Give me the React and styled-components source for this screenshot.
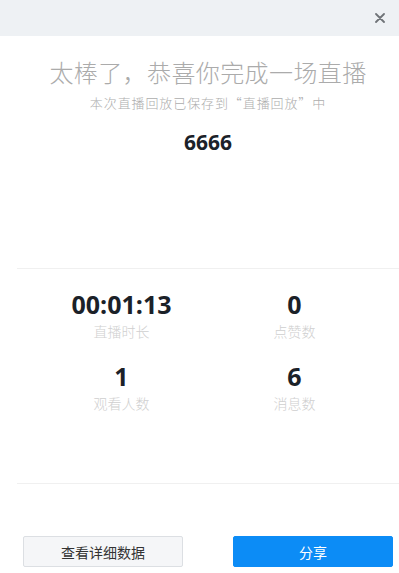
import React from "react";
import styled, { createGlobalStyle } from "styled-components";

const Global = createGlobalStyle`
  html, body { margin: 0; padding: 0; background: #fff; }
  body {
    font-family: "Noto Sans CJK SC", "Noto Sans", sans-serif;
  }
`;

const Wrapper = styled.div`
  width: 399px;
  height: 573px;
  overflow: hidden;
  background: #fff;
`;

const Header = styled.div`
  height: 36px;
  background: #eef1f4;
  display: flex;
  align-items: center;
  justify-content: flex-end;
  padding-right: 12px;
  box-sizing: border-box;
`;

const Close = styled.button`
  border: none;
  background: none;
  padding: 0;
  width: 14px;
  height: 14px;
  display: flex;
  align-items: center;
  justify-content: center;
  cursor: pointer;
`;

const Body = styled.div`
  padding-left: 17px;
`;

const Intro = styled.div`
  display: flex;
  flex-direction: column;
  align-items: center;
  padding-top: 20px;
`;

const Title = styled.div`
  font-size: 24px;
  line-height: 32px;
  font-weight: 300;
  color: #ababab;
  letter-spacing: 0.4px;
`;

const Sub = styled.div`
  margin-top: 5px;
  font-size: 13px;
  line-height: 20px;
  font-weight: 300;
  color: #adadad;
  letter-spacing: 0.9px;
`;

const Big = styled.div`
  margin-top: 15px;
  font-size: 21px;
  line-height: 28px;
  font-weight: 700;
  color: #1b2128;
  font-family: "Open Sans", "Noto Sans", sans-serif;
`;

const Divider = styled.div`
  height: 1px;
  background: #f0f0f0;
  margin-top: ${p => p.$top}px;
`;

const Stats = styled.div`
  width: 346px;
  margin: 0 auto;
  padding-top: 20px;
  display: grid;
  grid-template-columns: 1fr 1fr;
  row-gap: 20px;
`;

const Stat = styled.div`
  display: flex;
  flex-direction: column;
  align-items: center;
  gap: 2px;
`;

const Value = styled.div`
  font-family: "Open Sans", "Noto Sans", sans-serif;
  font-weight: 700;
  font-size: 25px;
  line-height: 30px;
  color: #1b2128;
`;

const Label = styled.div`
  font-size: 14px;
  line-height: 20px;
  font-weight: 300;
  color: #cfcfcf;
`;

const Actions = styled.div`
  margin-top: 52px;
  display: flex;
  justify-content: center;
  gap: 50px;
`;

const Btn = styled.button`
  width: 160px;
  height: 31px;
  box-sizing: border-box;
  border-radius: 2px;
  font-family: "Noto Sans CJK SC", sans-serif;
  font-size: 14px;
  cursor: pointer;
  border: 1px solid ${p => (p.$primary ? "#0c8cf6" : "#dcdfe3")};
  background: ${p => (p.$primary ? "#0c8cf6" : "#f5f6f8")};
  color: ${p => (p.$primary ? "#fff" : "#333")};
`;

const stats = [
  { value: "00:01:13", label: "直播时长" },
  { value: "0", label: "点赞数" },
  { value: "1", label: "观看人数" },
  { value: "6", label: "消息数" },
];

export default function App() {
  return (
    <Wrapper>
      <Global />
      <Header>
        <Close aria-label="close">
          <svg width="10" height="10" viewBox="0 0 10 10">
            <path d="M1 1L9 9M9 1L1 9" stroke="#6f7378" strokeWidth="1.8" strokeLinecap="round" />
          </svg>
        </Close>
      </Header>
      <Body>
        <Intro>
          <Title>太棒了，恭喜你完成一场直播</Title>
          <Sub>本次直播回放已保存到“直播回放”中</Sub>
          <Big>6666</Big>
        </Intro>
        <Divider $top={112} />
        <Stats>
          {stats.map(s => (
            <Stat key={s.label}>
              <Value>{s.value}</Value>
              <Label>{s.label}</Label>
            </Stat>
          ))}
        </Stats>
        <Divider $top={70} />
        <Actions>
          <Btn>查看详细数据</Btn>
          <Btn $primary>分享</Btn>
        </Actions>
      </Body>
    </Wrapper>
  );
}
